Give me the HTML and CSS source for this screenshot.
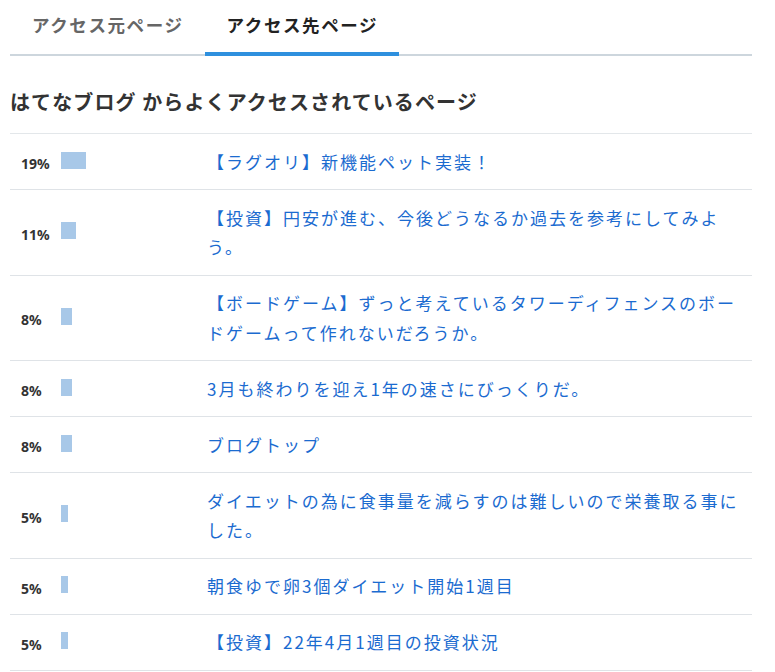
FILE: index.html
```html
<!DOCTYPE html>
<html lang="ja">
<head>
<meta charset="utf-8">
<title>アクセス解析</title>
<link rel="stylesheet" href="styles.css">
</head>
<body>
<div class="panel">
  <nav class="tabs">
    <a class="tab" href="#">アクセス元ページ</a>
    <a class="tab is-active" href="#">アクセス先ページ</a>
  </nav>

  <h2 class="panel-title">はてなブログ からよくアクセスされているページ</h2>

  <ul class="ranking">
    <li class="rank-row">
      <span class="rank-pct">19%</span>
      <span class="rank-bar-cell"><span class="rank-bar" style="width:25px"></span></span>
      <a class="rank-link" href="#">【ラグオリ】新機能ペット実装！</a>
    </li>
    <li class="rank-row">
      <span class="rank-pct">11%</span>
      <span class="rank-bar-cell"><span class="rank-bar" style="width:15px"></span></span>
      <a class="rank-link" href="#">【投資】円安が進む、今後どうなるか過去を参考にしてみよう。</a>
    </li>
    <li class="rank-row">
      <span class="rank-pct">8%</span>
      <span class="rank-bar-cell"><span class="rank-bar" style="width:11px"></span></span>
      <a class="rank-link" href="#">【ボードゲーム】ずっと考えているタワーディフェンスのボードゲームって作れないだろうか。</a>
    </li>
    <li class="rank-row">
      <span class="rank-pct">8%</span>
      <span class="rank-bar-cell"><span class="rank-bar" style="width:11px"></span></span>
      <a class="rank-link" href="#">3月も終わりを迎え1年の速さにびっくりだ。</a>
    </li>
    <li class="rank-row">
      <span class="rank-pct">8%</span>
      <span class="rank-bar-cell"><span class="rank-bar" style="width:11px"></span></span>
      <a class="rank-link" href="#">ブログトップ</a>
    </li>
    <li class="rank-row">
      <span class="rank-pct">5%</span>
      <span class="rank-bar-cell"><span class="rank-bar" style="width:7px"></span></span>
      <a class="rank-link" href="#">ダイエットの為に食事量を減らすのは難しいので栄養取る事にした。</a>
    </li>
    <li class="rank-row">
      <span class="rank-pct">5%</span>
      <span class="rank-bar-cell"><span class="rank-bar" style="width:7px"></span></span>
      <a class="rank-link" href="#">朝食ゆで卵3個ダイエット開始1週目</a>
    </li>
    <li class="rank-row">
      <span class="rank-pct">5%</span>
      <span class="rank-bar-cell"><span class="rank-bar" style="width:7px"></span></span>
      <a class="rank-link" href="#">【投資】22年4月1週目の投資状況</a>
    </li>
  </ul>
</div>
</body>
</html>
```

FILE: styles.css
```css
html, body {
  margin: 0;
  padding: 0;
  background: #ffffff;
}

body {
  font-family: "Noto Sans CJK JP", "Noto Sans", sans-serif;
  color: #333333;
}

.panel {
  width: 742px;
  margin-left: 10px;
}

/* tab strip */
.tabs {
  display: flex;
  border-bottom: 2px solid #cdd6dd;
}

.tab {
  display: block;
  height: 52px;
  line-height: 49px;
  padding: 0 21px 0 22px;
  margin-bottom: -2px;
  border-bottom: 4px solid transparent;
  font-size: 17.5px;
  font-weight: 700;
  letter-spacing: 1.6px;
  color: #666666;
  text-decoration: none;
}

.tab.is-active {
  color: #222222;
  border-bottom-color: #2e90de;
}

.panel-title {
  margin: 31px 0 16px;
  font-size: 20px;
  line-height: 30px;
  font-weight: 700;
  letter-spacing: 1.1px;
  color: #333333;
}

/* ranking list */
.ranking {
  list-style: none;
  margin: 0;
  padding: 0;
  border-top: 1px solid #e3e7ea;
}

.rank-row {
  display: grid;
  grid-template-columns: 40px 146px 1fr;
  align-items: center;
  padding: 12.75px 8px 12.75px 11px;
  border-bottom: 1px solid #dfe3e7;
}

.rank-pct {
  font-family: "Noto Sans", sans-serif;
  font-size: 14px;
  font-weight: 700;
  color: #333333;
  padding-top: 4px;
}

.rank-bar-cell {
  display: flex;
  align-items: center;
}

.rank-bar {
  display: block;
  height: 17px;
  margin-bottom: 3px;
  background: #a8c8e8;
}

.rank-link {
  font-size: 17px;
  line-height: 29.5px;
  letter-spacing: 2px;
  color: #1b6bd0;
  text-decoration: none;
}
```
